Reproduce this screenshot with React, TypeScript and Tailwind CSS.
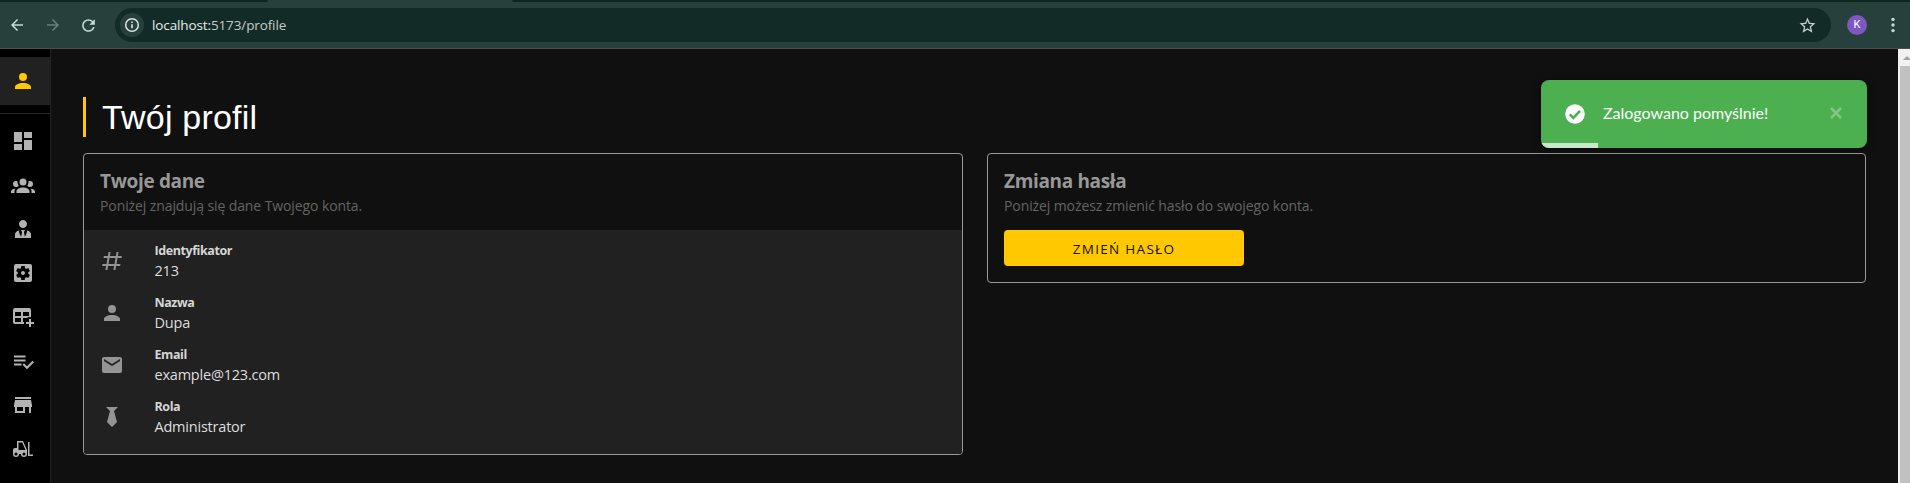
import React from 'react';
import { MdSettingsApplications, MdStarBorder, MdRefresh, MdArrowBack, MdArrowForward } from 'react-icons/md';

const paths = {
  account:
    'M12,4A4,4 0 0,1 16,8A4,4 0 0,1 12,12A4,4 0 0,1 8,8A4,4 0 0,1 12,4M12,14C16.42,14 20,15.79 20,18V20H4V18C4,15.79 7.58,14 12,14Z',
  dashboard: 'M13,3V9H21V3M13,21H21V11H13M3,21H11V15H3M3,13H11V3H3V13Z',
  group:
    'M12,5.5A3.5,3.5 0 0,1 15.5,9A3.5,3.5 0 0,1 12,12.5A3.5,3.5 0 0,1 8.5,9A3.5,3.5 0 0,1 12,5.5M5,8C5.56,8 6.08,8.15 6.53,8.42C6.38,9.85 6.8,11.27 7.66,12.38C7.16,13.34 6.16,14 5,14A3,3 0 0,1 2,11A3,3 0 0,1 5,8M19,8A3,3 0 0,1 22,11A3,3 0 0,1 19,14C17.84,14 16.84,13.34 16.34,12.38C17.2,11.27 17.62,9.85 17.47,8.42C17.92,8.15 18.44,8 19,8M5.5,18.25C5.5,16.18 8.41,14.5 12,14.5C15.59,14.5 18.5,16.18 18.5,18.25V20H5.5V18.25M0,20V18.5C0,17.11 1.89,15.94 4.45,15.6C3.86,16.28 3.5,17.22 3.5,18.25V20H0M24,20H20.5V18.25C20.5,17.22 20.14,16.28 19.55,15.6C22.11,15.94 24,17.11 24,18.5V20Z',
  manager:
    'M12 3C14.21 3 16 4.79 16 7S14.21 11 12 11 8 9.21 8 7 9.79 3 12 3M16 13.54C16 14.6 15.72 17.07 13.81 19.83L13 15L13.94 13.12C13.32 13.05 12.67 13 12 13S10.68 13.05 10.06 13.12L11 15L10.19 19.83C8.28 17.07 8 14.6 8 13.54C5.61 14.24 4 15.5 4 17V21H20V17C20 15.5 18.4 14.24 16 13.54Z',
  table:
    'M18,14H20V17H23V19H20V22H18V19H15V17H18V14M4,3H18A2,2 0 0,1 20,5V12.08C18.45,11.82 16.92,12.18 15.68,13H12V17H13.08C12.97,17.68 12.97,18.35 13.08,19H4A2,2 0 0,1 2,17V5A2,2 0 0,1 4,3M4,7V11H10V7H4M12,7V11H18V7H12M4,13V17H10V13H4Z',
  playlist:
    'M14.5,10.4H3V12.4H14.5V10.4M14.5,6.4H3V8.4H14.5V6.4M3,16.4H10.5V14.4H3V16.4M21.5,11.8L23,13.3L16,20.3L11.5,15.8L13,14.3L16,17.3L21.5,11.8Z',
  store: 'M12,18H6V14H12M21,14V12L20,7H4L3,12V14H4V20H14V14H18V20H20V14M20,4H4V6H20V4Z',
  forklift:
    'M6 4V11H4C2.89 11 2 11.89 2 13V17A3 3 0 0 0 5 20A3 3 0 0 0 8 17H10A3 3 0 0 0 13 20A3 3 0 0 0 16 17V13L12 4H6M17 5V19H22V17.5H18.5V5H17M7.5 5.5H11.2L14.5 13H7.5V5.5M5 15.5A1.5 1.5 0 0 1 6.5 17A1.5 1.5 0 0 1 5 18.5A1.5 1.5 0 0 1 3.5 17A1.5 1.5 0 0 1 5 15.5M13 15.5A1.5 1.5 0 0 1 14.5 17A1.5 1.5 0 0 1 13 18.5A1.5 1.5 0 0 1 11.5 17A1.5 1.5 0 0 1 13 15.5Z',
  pound:
    'M5.41,21L6.12,17H2.12L2.47,15H6.47L7.53,9H3.53L3.88,7H7.88L8.59,3H10.59L9.88,7H15.88L16.59,3H18.59L17.88,7H21.88L21.53,9H17.53L16.47,15H20.47L20.12,17H16.12L15.41,21H13.41L14.12,17H8.12L7.41,21H5.41M9.53,9L8.47,15H14.47L15.53,9H9.53Z',
  email:
    'M20,8L12,13L4,8V6L12,11L20,6M20,4H4C2.89,4 2,4.89 2,6V18A2,2 0 0,0 4,20H20A2,2 0 0,0 22,18V6C22,4.89 21.1,4 20,4Z',
  tie: 'M6,2L10,6L7,17L12,22L17,17L14,6L18,2Z',
};

function Icon({ d }: { d: string }) {
  return (
    <svg viewBox="0 0 24 24" className="size-6 shrink-0 fill-current">
      <path d={d} />
    </svg>
  );
}

function BrowserBar() {
  return (
    <header className="h-[49px] shrink-0 border-b border-[#47504e] bg-[#28403b]">
      <div className="flex h-0.5 justify-between">
        <div className="w-[268px] rounded-br bg-[#0c2521]" />
        <div className="w-[1398px] rounded-bl bg-[#0c2521]" />
      </div>
      <div className="flex h-[46px] items-center pl-2 pr-2">
        <MdArrowBack className="size-[18px] text-[#c4dcd6]" />
        <MdArrowForward className="ml-[18px] size-[18px] text-[#6c7f7a]" />
        <MdRefresh className="ml-[17px] size-[19px] text-[#c4dcd6]" />
        <div className="ml-[17px] flex h-[34px] w-[1716px] items-center rounded-full bg-[#122b27] pl-[5px] pr-[14px]">
          <span className="flex size-6 items-center justify-center rounded-full bg-[#28403b]">
            <svg viewBox="0 0 16 16" className="size-4 fill-none stroke-[#dbe5e2]">
              <circle cx="8" cy="8" r="6.3" strokeWidth="1.5" />
              <path d="M8 7.2v4M8 4.4v1.5" strokeWidth="1.6" />
            </svg>
          </span>
          <span className="ml-2 text-[13.5px] leading-5 tracking-[-0.12px] text-[#c3cbc9]">
            <span className="text-[#e4ebe9]">localhost:</span>5173/profile
          </span>
          <MdStarBorder className="ml-auto size-[19px] text-[#c4d0cd]" />
        </div>
        <span className="ml-4 flex size-5 items-center justify-center rounded-full bg-[#7e57c2] font-['Roboto',sans-serif] text-[11px] text-white">
          K
        </span>
        <svg viewBox="0 0 4 16" className="ml-6 h-4 w-1 fill-[#c4dcd6]">
          <circle cx="2" cy="2.4" r="1.7" />
          <circle cx="2" cy="8" r="1.7" />
          <circle cx="2" cy="13.6" r="1.7" />
        </svg>
      </div>
    </header>
  );
}

function Sidebar() {
  return (
    <nav className="w-[51px] shrink-0 border-r border-[#232323] bg-black pt-2 text-[#b3b3b3]">
      <div className="flex h-12 items-center bg-[#212121] pb-px pl-[10.5px] text-[#ffc800]">
        <Icon d={paths.account} />
      </div>
      <div className="mt-2 h-px bg-[#262626]" />
      <div className="mt-[15px] flex flex-col gap-5 pl-[10.5px]">
        <Icon d={paths.dashboard} />
        <Icon d={paths.group} />
        <Icon d={paths.manager} />
        <MdSettingsApplications className="size-6" />
        <Icon d={paths.table} />
        <Icon d={paths.playlist} />
        <Icon d={paths.store} />
        <Icon d={paths.forklift} />
      </div>
    </nav>
  );
}

const details = [
  { icon: paths.pound, label: 'Identyfikator', value: '213' },
  { icon: paths.account, label: 'Nazwa', value: 'Dupa' },
  { icon: paths.email, label: 'Email', value: 'example@123.com' },
  { icon: paths.tie, label: 'Rola', value: 'Administrator' },
];

function CardHeader({ title, subtitle }: { title: string; subtitle: string }) {
  return (
    <div className="h-[76px] px-4 pt-[13px]">
      <h2 className="text-[19px] font-bold leading-7 tracking-[-0.35px] text-[#989898]">{title}</h2>
      <p className="mt-px text-sm leading-5 tracking-[-0.1px] text-[#646464]">{subtitle}</p>
    </div>
  );
}

function Toast() {
  return (
    <div className="absolute right-[31px] top-[31px] h-[68px] w-[326px] overflow-hidden rounded-lg bg-[#4caf50] shadow-[0_1px_10px_rgba(0,0,0,0.4)]">
      <div className="flex h-full items-center pl-6 pr-[25px]">
        <svg viewBox="0 0 20 20" className="size-5">
          <circle cx="10" cy="10" r="9.8" className="fill-white" />
          <path d="M4.8 10.3l3.5 3.5 6.7-6.9" className="fill-none stroke-[#4caf50]" strokeWidth="2.6" />
        </svg>
        <span className="-mt-0.5 ml-[18px] font-['Lato',sans-serif] text-base text-white">Zalogowano pomyślnie!</span>
        <svg viewBox="0 0 12 12" className="-mt-0.5 ml-auto size-3 stroke-white/30" strokeWidth="2.6">
          <path d="M1 1l10 10M11 1L1 11" />
        </svg>
      </div>
      <div className="absolute bottom-0 left-0 h-[5px] w-[57px] bg-white/70" />
    </div>
  );
}

function ScrollBar() {
  return (
    <div className="w-3 shrink-0 overflow-hidden bg-[#f1f1f1]">
      <div className="flex h-[17px] items-center pl-[5px]">
        <svg viewBox="0 0 8 4" className="h-1 w-2 shrink-0 fill-[#a3a3a3]">
          <path d="M0 4L4 0l4 4z" />
        </svg>
      </div>
      <div className="ml-0.5 h-full bg-[#c1c1c1]" />
    </div>
  );
}

export default function App() {
  return (
    <div className="flex h-[483px] w-[1910px] flex-col overflow-hidden bg-[#101010] font-['Open_Sans',sans-serif]">
      <BrowserBar />
      <div className="flex min-h-0 flex-1">
        <Sidebar />
        <main className="relative min-w-0 flex-1 pl-8 pr-8 pt-12">
          <h1 className="h-10 border-l-[3px] border-[#ffc800] pl-4 font-['Liberation_Sans',sans-serif] text-[34px] leading-10 tracking-[0.2px] text-white">
            Twój profil
          </h1>
          <div className="mt-4 flex items-start gap-6">
            <section className="h-[302px] w-[880px] shrink-0 overflow-hidden rounded border border-[#9a9a9a]">
              <CardHeader title="Twoje dane" subtitle="Poniżej znajdują się dane Twojego konta." />
              <ul className="h-[224px] bg-[#212121] pt-[5px]">
                {details.map((item) => (
                  <li key={item.label} className="flex h-[52px] items-center pl-[15.5px] text-[#949494]">
                    <Icon d={item.icon} />
                    <div className="ml-[31px]">
                      <div className="text-[12.5px] font-bold leading-5 tracking-[-0.42px] text-[#d6d6d6]">{item.label}</div>
                      <div className="text-[14.5px] leading-5 tracking-[-0.21px] text-[#dedede]">{item.value}</div>
                    </div>
                  </li>
                ))}
              </ul>
            </section>
            <section className="h-[130px] flex-1 rounded border border-[#9a9a9a]">
              <CardHeader title="Zmiana hasła" subtitle="Poniżej możesz zmienić hasło do swojego konta." />
              <button className="ml-4 block h-9 w-60 rounded bg-[#ffc800] pt-px text-[13.5px] leading-5 tracking-[1.3px] text-[#101010]">
                ZMIEŃ HASŁO
              </button>
            </section>
          </div>
          <Toast />
        </main>
        <ScrollBar />
      </div>
    </div>
  );
}
